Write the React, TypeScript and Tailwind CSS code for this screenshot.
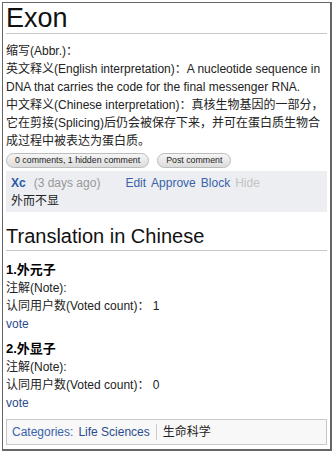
import React from 'react';

const font = { fontFamily: '"Liberation Sans", Arial, "Noto Sans CJK SC", sans-serif' };

function VoteItem({ n, name, count }: { n: number; name: string; count: number }) {
  return (
    <div className="text-[12px] leading-[18px] text-[#222]">
      <div className="font-bold text-[13px] text-black">
        {n}.{name}
      </div>
      <div>注解(Note):</div>
      <div>认同用户数(Voted count)： {count}</div>
      <div className="text-[#2a4b8d]">vote</div>
    </div>
  );
}

export default function App() {
  return (
    <div className="w-[334px] h-[454px] bg-white" style={font}>
      <div className="mx-[2px] mt-[2px] h-[449px] border border-[#666] border-r-2 border-b-2 px-[3px] overflow-hidden">
        <h1 className="text-[27px] leading-[28px] text-[#111] pt-[1px] pb-[1px] border-b border-[#c8c8c8]">Exon</h1>

        <div className="mt-[8px] text-[12px] leading-[18px] text-[#222]">
          <div>缩写(Abbr.)：</div>
          <div>英文释义(English interpretation)：A nucleotide sequence in DNA that carries the code for the final messenger RNA.</div>
          <div>中文释义(Chinese interpretation)：真核生物基因的一部分，它在剪接(Splicing)后仍会被保存下来，并可在蛋白质生物合成过程中被表达为蛋白质。</div>
        </div>

        <div className="flex gap-[8px] mt-[3px]">
          <span className="rounded-full border border-[#bbb] bg-gradient-to-b from-[#f6f6f6] to-[#dcdcdc] px-[8px] h-[15px] leading-[13px] text-[8.8px] text-[#222]">
            0 comments, 1 hidden comment
          </span>
          <span className="rounded-full border border-[#bbb] bg-gradient-to-b from-[#f6f6f6] to-[#dcdcdc] px-[8px] h-[15px] leading-[13px] text-[8.8px] text-[#222]">
            Post comment
          </span>
        </div>

        <div className="mt-[3px] bg-[#eceef2] px-[5px] pt-[3px] pb-[2px] text-[12px] leading-[18px]">
          <div className="flex">
            <span className="font-bold text-[#2a5aa5]">Xc</span>
            <span className="ml-[8px] text-[#999]">(3 days ago)</span>
            <span className="ml-[25px] text-[#3a62a8]">Edit</span>
            <span className="ml-[5px] text-[#3a62a8]">Approve</span>
            <span className="ml-[5px] text-[#3a62a8]">Block</span>
            <span className="ml-[5px] text-[#c4c4c4]">Hide</span>
          </div>
          <div className="text-[#222]">外而不显</div>
        </div>

        <h2 className="mt-[12px] text-[20px] leading-[24px] text-[#111] pb-[2px] border-b border-[#c8c8c8]">Translation in Chinese</h2>

        <div className="mt-[10px]">
          <VoteItem n={1} name="外元子" count={1} />
        </div>
        <div className="mt-[7px]">
          <VoteItem n={2} name="外显子" count={0} />
        </div>

        <div className="mt-[7px] border border-[#c8c8c8] bg-[#f8f8f8] px-[5px] h-[26px] flex items-center text-[12px]">
          <span className="text-[#3a62a8]">Categories:</span>
          <span className="ml-[5px] text-[#2a4b8d]">Life Sciences</span>
          <span className="mx-[6px] w-px h-[16px] bg-[#ccc]"></span>
          <span className="text-[#222]">生命科学</span>
        </div>
      </div>
    </div>
  );
}
